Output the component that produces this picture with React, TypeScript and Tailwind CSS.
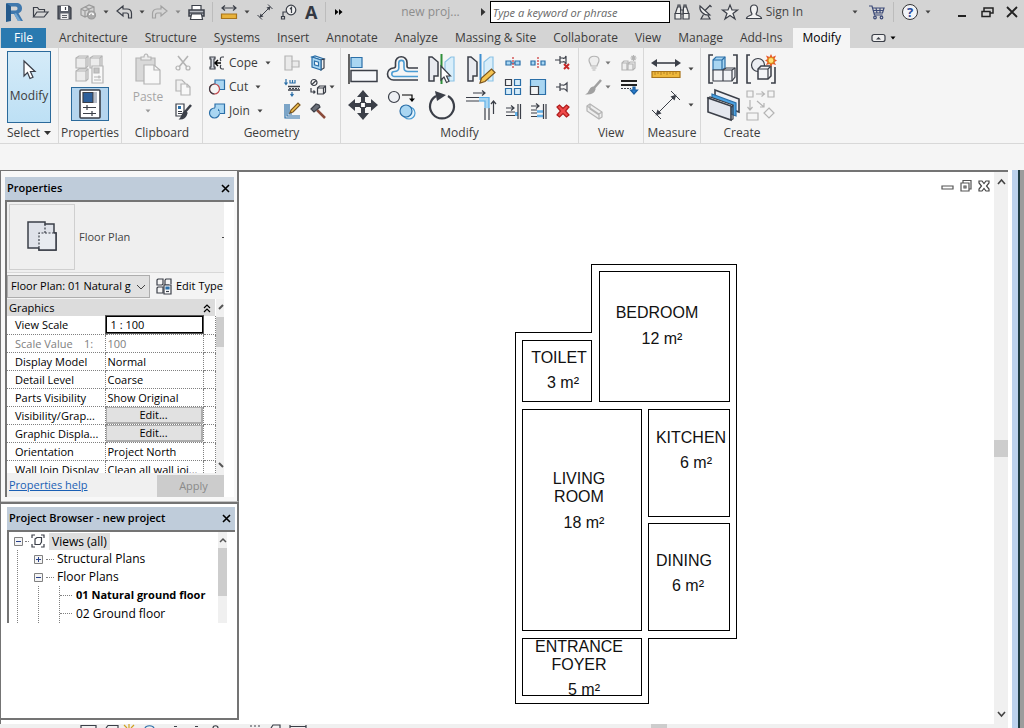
import React from "react";

const DARK = "#3b3f48";
const GRAY = "#b4b4b4";
const BLUE = "#2b6fa8";
const SKY = "#a9d6f2";

interface IconProps {
  w?: number;
  h?: number;
  stroke?: string;
  children: React.ReactNode;
}

function Icon({ w = 16, h = 16, stroke = DARK, children }: IconProps) {
  return (
    <svg
      width={w}
      height={h}
      viewBox={`0 0 ${w} ${h}`}
      fill="none"
      stroke={stroke}
      strokeWidth={1.2}
      className="shrink-0 overflow-visible"
      aria-hidden="true"
    >
      {children}
    </svg>
  );
}

function Caret({ color = "#444444" }: { color?: string }) {
  return (
    <svg width="4" height="4" viewBox="0 0 4 4" className="shrink-0 overflow-visible" aria-hidden="true">
      <path d="M-0.5 0.5h5L2 3.5z" fill={color} />
    </svg>
  );
}

function Tool({ label, children }: { label: string; children: React.ReactNode }) {
  return (
    <button type="button" aria-label={label} className="flex shrink-0 items-center justify-center">
      {children}
    </button>
  );
}

function Separator() {
  return <div className="h-5 w-px shrink-0 bg-[#bcbcbc]" />;
}

function TitleBar() {
  return (
    <header className="mb-1 flex h-6 items-center pr-1 pl-1 text-xs text-[#444444]">
      <div className="flex items-center gap-2">
        <Icon w={20} h={20} stroke="none">
          <path d="M3 1h9c4 0 6 2 6 5.500c0 2.500-1.500 4-3.500 4.800L19 19h-5l-4-7H7v7H2z" fill="#3f78ad" />
          <path d="M7 4.500h4.500c1.500 0 2 .8 2 2s-.7 2-2 2H7z" fill="#d4d4d4" />
          <path d="M2 1l5 3.500V19l-5 1z" fill="#255a8c" />
          <path d="M10 12l4 7h3l-5-8z" fill="#6fa5d2" />
        </Icon>
        <Tool label="Open">
          <Icon>
            <path d="M1.500 13V3.500h4l1.500 2h5.500V8M1.500 13l3.500-5h11l-4 5z" />
          </Icon>
        </Tool>
        <Tool label="Save">
          <Icon>
            <path d="M2 2h11l2 2v11H2z" fill="#5a5f69" />
            <path d="M5 2h7v5H5z" fill="#ffffff" stroke="none" />
            <path d="M9.500 3v3" />
            <path d="M4.500 9.500h8V15h-8z" fill="#eeeeee" stroke="none" />
            <path d="M6 11.500h5M6 13.500h5" strokeWidth={0.8} />
          </Icon>
        </Tool>
        <Tool label="Synchronize">
          <Icon stroke="#999999">
            <path d="M1 5l4-2 4 2v6l-4 2-4-2zM5 3l4-2 5 2v6M1 5l4 2 4-2M5 7v6M9 5l5-2" />
            <circle cx="11.500" cy="11" r="4" fill="#aaaaaa" />
            <path d="M9.500 11a2 2 0 0 1 4 0M13.500 11l-1.200-1" stroke="#ffffff" />
          </Icon>
        </Tool>
        <Tool label="Synchronize options">
          <Caret />
        </Tool>
        <Tool label="Undo">
          <Icon>
            <path d="M1 7l6-5v3h4c3 0 4.500 2 4.500 4.500V14h-3v-3c0-1.500-1-2-2-2H7v3z" />
          </Icon>
        </Tool>
        <Tool label="Undo history">
          <Caret />
        </Tool>
        <Tool label="Redo">
          <Icon stroke="#a2a2a2">
            <path d="M15 7L9 2v3H5C2 5 .5 7 .5 9.500V14h3v-3c0-1.500 1-2 2-2H9v3z" />
          </Icon>
        </Tool>
        <Tool label="Redo history">
          <Caret color="#888888" />
        </Tool>
        <Tool label="Print">
          <Icon>
            <path d="M4 6V1.500h9V6" fill="#ffffff" />
            <path d="M1 6h15v6H1z" fill="#b9bdc4" strokeWidth={1.500} />
            <path d="M3.500 10h10l1 5.500h-12z" fill="#ffffff" />
            <path d="M1 9h15" />
          </Icon>
        </Tool>
        <Separator />
        <Tool label="Measure">
          <Icon>
            <path d="M1 4h14M4 1.500L1 4l3 2.500M12 1.500L15 4l-3 2.500" />
            <path d="M.5 10h15v4.500H.5z" fill="#e8b23a" stroke="#a8741a" />
          </Icon>
        </Tool>
        <Tool label="Measure options">
          <Caret />
        </Tool>
        <Tool label="Aligned Dimension">
          <Icon>
            <path d="M3 13L13 3M11 .5L15.500 5M.5 11L5 15.500" strokeWidth={1} />
            <path d="M2.500 13.500l1-4 3 3zM13.500 2.500l-1 4-3-3z" fill={DARK} stroke="none" />
          </Icon>
        </Tool>
        <Tool label="Tag by Category">
          <Icon>
            <circle cx="10" cy="6" r="4.800" fill="#eeeeee" />
            <path d="M9 5l1.500-1.500V9M5 8H2v4M.5 12.500h3V15h-3z" />
          </Icon>
        </Tool>
        <button type="button" aria-label="Text" className="w-3 text-lg leading-5 font-bold text-[#333842]">
          A
        </button>
        <Separator />
        <Tool label="Customize Quick Access Toolbar">
          <Icon w={8} h={8} stroke="none">
            <path d="M1 1l3.500 3L1 7zM5 1l3.500 3L5 7z" fill="#000000" />
          </Icon>
        </Tool>
      </div>
      <div className="flex-1" />
      <span className="mr-5 text-[#8d8d8d]">new proj...</span>
      <div className="mr-1">
        <Tool label="Search options">
          <Icon w={6} h={8} stroke="none">
            <path d="M1 0l4.500 4L1 8z" fill="#333333" />
          </Icon>
        </Tool>
      </div>
      <input
        type="text"
        aria-label="Search"
        placeholder="Type a keyword or phrase"
        className="mr-1 h-[22px] w-[180px] border border-black bg-white px-0.5 text-[11px] italic placeholder:text-[#666666]"
      />
      <div className="flex items-center gap-2">
        <Tool label="Find">
          <Icon>
            <path
              d="M1.500 9l2-6h3l.5 12H1v-6M14.500 9l-2-6h-3L9 15h6V9M7 6h2v4H7M1 9.500h5.500M9.500 9.500H15M4 3V1h2v2M10 3V1h2v2"
              fill="#eeeeee"
            />
          </Icon>
        </Tool>
        <Tool label="Communication Center">
          <Icon>
            <path d="M2 2c-1 5 4 10 10 9z" fill="#eeeeee" />
            <path d="M7 6.500l5-5M11.500 1l2 2M5.500 10.500L3 15h9l-2-3.500" />
          </Icon>
        </Tool>
        <Tool label="Favorites">
          <Icon>
            <path d="M8 1l2 5h5.500l-4.500 3.500L13 15l-5-3.500L3 15l2-5.500L.5 6H6z" fill="#eeeeee" />
          </Icon>
        </Tool>
        <button type="button" className="flex items-center gap-1 whitespace-nowrap">
          <Icon>
            <path d="M8 1c2.500 0 3.500 1.500 3.500 4S10 10 10 10c0 2 5 1 5.500 4.500H.5C1 11 6 12 6 10c0 0-1.500-2.500-1.500-5S5.500 1 8 1z" fill="#f2f2f2" />
          </Icon>
          Sign In
        </button>
      </div>
      <div className="ml-[50px] flex items-center gap-3">
        <Tool label="Account menu">
          <Caret />
        </Tool>
        <Tool label="App Store">
          <Icon stroke="#3c4a78">
            <path d="M0 2h3l2.500 9h8M4 4h11l-1.500 5H5.500M7 4l1 5M11 4v5M4.500 6.500h10" />
            <circle cx="6" cy="13.500" r="1.300" />
            <circle cx="12.500" cy="13.500" r="1.300" />
          </Icon>
        </Tool>
      </div>
      <div className="mr-7 ml-2 flex items-center gap-2">
        <Separator />
        <Tool label="Help">
          <span className="flex h-4 w-4 items-center justify-center rounded-full border border-[#333333] bg-[#f2f4f8] text-[13px] leading-none font-bold text-[#2a4a9a]">
            ?
          </span>
        </Tool>
        <Tool label="Help menu">
          <Caret />
        </Tool>
      </div>
      <div className="flex items-center gap-3">
        <Tool label="Minimize">
          <Icon w={10} h={14} stroke="#222222">
            <path d="M0 11h8" strokeWidth={2} />
          </Icon>
        </Tool>
        <Tool label="Restore">
          <Icon w={14} h={14} stroke="#222222">
            <path d="M4 6V3h9v5h-3" strokeWidth={1.500} />
            <path d="M2 6.500h8v5H2z" strokeWidth={1.500} />
          </Icon>
        </Tool>
        <Tool label="Close">
          <Icon w={14} h={14} stroke="#222222">
            <path d="M1 2l10 10M11 2L1 12" strokeWidth={1.800} />
          </Icon>
        </Tool>
      </div>
    </header>
  );
}

const TABS = [
  "Architecture",
  "Structure",
  "Systems",
  "Insert",
  "Annotate",
  "Analyze",
  "Massing & Site",
  "Collaborate",
  "View",
  "Manage",
  "Add-Ins",
  "Modify",
];

function Tabs() {
  return (
    <nav className="flex h-5 items-stretch gap-px pl-px text-xs text-[#3c3c3c]">
      <button type="button" className="mr-1 w-[45px] bg-[#2a7ab0] text-white">
        File
      </button>
      {TABS.map((tab) => (
        <button
          key={tab}
          type="button"
          className={`whitespace-nowrap ${tab === "Modify" ? "ml-0.5 bg-[#f5f5f5] px-[9px] text-black" : "px-2"}`}
        >
          {tab}
        </button>
      ))}
      <button type="button" aria-label="Minimize ribbon" className="ml-5 flex items-center gap-1">
        <Icon w={16} h={8}>
          <rect x="1" y="0.5" width="13" height="7" rx="2" fill="#eeeeee" />
          <path d="M5 5.500L7.500 3 10 5.500z" fill={DARK} stroke="none" />
        </Icon>
        <Caret color="#000000" />
      </button>
    </nav>
  );
}

function Panel({ label, className, children }: { label: React.ReactNode; className: string; children: React.ReactNode }) {
  return (
    <section className={`flex flex-col pt-[3px] ${className}`}>
      <div className="flex h-[72px] justify-center">{children}</div>
      <div className="flex h-5 items-center justify-center text-xs">{label}</div>
    </section>
  );
}

const SMALL_MODIFY = [
  {
    label: "Split Element",
    icon: (
      <>
        <path d="M1 6h5v4H1zM10 6h5v4h-5z" fill={SKY} stroke={BLUE} />
        <path d="M6 8h4" stroke={BLUE} />
        <path d="M8 2v12" stroke="#cc3333" strokeDasharray="2 1" />
      </>
    ),
  },
  {
    label: "Split with Gap",
    icon: (
      <>
        <path d="M1 6h4v4H1zM11 6h4v4h-4z" fill={SKY} stroke={BLUE} />
        <path d="M8 2v12" stroke="#cc3333" strokeDasharray="2 1" />
      </>
    ),
  },
  {
    label: "Unpin",
    icon: (
      <>
        <path d="M0 5h5M5 1v8M5 3h3c1 1 2 0 3-2v8c-1-2-2-3-3-2H5" />
        <path d="M9 9l5 5M14 9l-5 5" stroke="#c62828" strokeWidth={2} />
      </>
    ),
  },
  {
    label: "Array",
    icon: (
      <>
        <path d="M.5 .5h6v6h-6z" />
        <path d="M9.500 .5h6v6h-6zM.5 9.500h6v6h-6zM9.500 9.500h6v6h-6z" fill="#d5ecfa" stroke={BLUE} />
      </>
    ),
  },
  {
    label: "Scale",
    icon: (
      <>
        <path d="M.5 .5h15v15H.5z" fill={SKY} stroke={BLUE} />
        <path d="M.5 7.500h8v8h-8z" fill="#f4f4f4" />
      </>
    ),
  },
  {
    label: "Pin",
    icon: <path d="M1 8h4M5 4v8M5 6h3c1 1 2 0 4-2v8c-2-2-3-3-4-2H5" />,
  },
  {
    label: "Trim/Extend Single Element",
    icon: (
      <>
        <path d="M1 5h8M6 2.500L9 5 6 7.500M1 9h9M1 12.500h9" />
        <path d="M10 11h3" stroke="#62b0e8" strokeWidth={4} />
        <path d="M13 1v15M15.500 1v15" />
      </>
    ),
  },
  {
    label: "Trim/Extend Multiple Elements",
    icon: (
      <>
        <path d="M1 3h8M6 .5L9 3 6 5.500M1 7h6M1 10h6M1 13.500h6" />
        <path d="M7 8.500h6M7 13h6" stroke="#62b0e8" strokeWidth={2.500} />
        <path d="M13.500 1v15M16 1v15" />
      </>
    ),
  },
  {
    label: "Delete",
    icon: (
      <path d="M2 4l2.500-2L8 5.500 11.500 2 14 4l-3.500 4 3.500 4-2.500 2L8 10.500 4.500 14 2 12l3.500-4z" fill="#f04a4a" stroke="#b01c1c" />
    ),
  },
];

const LARGE_MODIFY = [
  {
    label: "Align",
    icon: (
      <>
        <path d="M1 1v30" stroke="#000000" />
        <path d="M3 4.500h11v10H3z" fill={SKY} stroke={BLUE} />
        <path d="M3 17.500h26v11H3z" fill="#f6f7fa" strokeWidth={1.500} />
      </>
    ),
  },
  {
    label: "Offset",
    icon: (
      <>
        <path
          d="M31 15H22c-1 0-2-1-2-2V9.500a5.700 5.700 0 0 0-11.500 0V13c0 1.500-1 2-2 2a5.500 5.500 0 0 0 0 12H31"
          strokeWidth={1.600}
        />
        <path
          d="M31 18.500H21c-2.500 0-4-1.500-4-4V10a2.600 2.600 0 0 0-5.200 0v5c0 2-2 3.500-4.500 3.500a2.500 2.500 0 0 0 0 5H31"
          stroke="#4b9cd3"
          strokeWidth={1.600}
        />
      </>
    ),
  },
  {
    label: "Mirror - Pick Axis",
    icon: (
      <>
        <path d="M3 4h3l6 5v14H8v5H3z" fill="#e8eaf0" strokeWidth={1.500} />
        <path d="M28 4h-3l-6 5v14h4v5h5z" fill="#d9eefa" stroke="#8cc3e6" />
        <path d="M15.500 1v30" stroke="#2f8f3a" strokeWidth={2} />
        <path d="M15 13v14l3-3 2.500 5.500 2.500-1.200-2.500-5.300h4z" fill="#ffffff" />
      </>
    ),
  },
  {
    label: "Mirror - Draw Axis",
    icon: (
      <>
        <path d="M3 4h3l6 5v14H8v5H3z" fill="#e8eaf0" strokeWidth={1.500} />
        <path d="M28 4h-3l-6 5v14h4v5h5z" fill="#d9eefa" stroke="#8cc3e6" />
        <path d="M15.500 1v26" stroke="#3f8fd0" strokeWidth={2} />
        <path d="M15 30l1.500-5 10-9 3.500 3.500-10 9z" fill="#f5c451" stroke="#7a5520" />
      </>
    ),
  },
  {
    label: "Move",
    icon: (
      <>
        <path
          d="M15 1l6 7h-4v5h-4V8H9zM15 31l6-7h-4v-5h-4v5H9zM0 16l7-6v4h5v4H7v4zM30 16l-7-6v4h-5v4h5v4z"
          fill={DARK}
          stroke="none"
        />
        <path d="M12.500 13.500h5v5h-5z" fill="#ffffff" />
      </>
    ),
  },
  {
    label: "Copy",
    icon: (
      <>
        <circle cx="7" cy="8" r="5.500" fill="#eef0f4" />
        <path d="M15 6h10v5" stroke="#000000" />
        <path d="M22 9.500h6L25 13z" fill="#000000" stroke="none" />
        <circle cx="22" cy="24" r="6" fill="#e3f2fb" stroke="#4b9cd3" />
        <circle cx="19" cy="22" r="6" fill={SKY} stroke={BLUE} />
      </>
    ),
  },
  {
    label: "Rotate",
    icon: (
      <>
        <path d="M22 7a12 12 0 1 1-12 0" strokeWidth={2.200} />
        <path d="M9 2l11 4-9 6z" fill={DARK} stroke="none" />
      </>
    ),
  },
  {
    label: "Trim/Extend to Corner",
    icon: (
      <>
        <path d="M8 4h12M17 1.500L20 4l-3 2.500M1 8.500h13M1 12h13M20 19v12M24 19v12M28.500 25V12M26 15l2.500-3 2.500 3" />
        <path d="M14 10.200h8.200v9" stroke={SKY} strokeWidth={4} />
        <path d="M14 8.500h10v10.500M14 12h6v7" stroke="#5aaee8" />
      </>
    ),
  },
];

function Ribbon() {
  return (
    <div className="flex h-24 divide-x divide-[#d8d8d8] border-b border-[#d8d8d8] bg-[#f5f5f5] text-[#3c3c3c]">
      <Panel
        className="w-[59px] shrink-0"
        label={
          <button type="button" className="flex items-center gap-1">
            Select
            <Icon w={7} h={4} stroke="none">
              <path d="M0 0h7L3.500 4z" fill="#333333" />
            </Icon>
          </button>
        }
      >
        <button
          type="button"
          className="flex w-11 flex-col items-center gap-2 border border-[#2b6a9b] bg-gradient-to-b from-[#d5ebf8] to-[#bde0f5] pt-2 text-xs"
        >
          <Icon w={16} h={20}>
            <path d="M3 1v15l3.500-3.500L9 18.500l3-1.200-2.600-5.800H14z" fill="#ffffff" />
          </Icon>
          Modify
        </button>
      </Panel>

      <Panel className="w-[63px] shrink-0" label="Properties">
        <div className="flex flex-col items-center">
          <div className="flex h-9 items-center">
            <Tool label="Type Properties">
              <Icon w={30} h={30} stroke={GRAY}>
                <path d="M1 4l3-2h9v10l-2 2H1zM15 4l3-2h9v10l-2 2H15zM1 17l3-2h9v10l-2 2H1z" fill="#ececec" />
                <path d="M1 4h10v10M11 4l2-2M15 4h10v8M25 4l2-2M1 17h10v10M11 17l2-2" />
                <path d="M17 12h11v17H17z" fill="#f8f8f8" />
                <path d="M19 14h5v5h-5z" fill="#c4c4c4" />
                <path d="M19 23h7M19 26h7M24 21.500v3" />
              </Icon>
            </Tool>
          </div>
          <button
            type="button"
            aria-label="Properties"
            className="flex h-[34px] w-[38px] items-center justify-center border border-[#2b6a9b] bg-[#b5d5ee]"
          >
            <Icon w={22} h={30}>
              <rect x="1" y="1" width="20" height="28" rx="1" fill="#ffffff" strokeWidth={1.600} />
              <path d="M4 3.500h10v10H4z" fill="#2d5f9a" />
              <path d="M16.500 3v11" stroke="#b7bdc8" strokeWidth={3} />
              <path d="M4 18.500h13M4 24.500h13M8 16v5M13 22v5" />
            </Icon>
          </button>
        </div>
      </Panel>

      <Panel className="w-[81px] shrink-0" label="Clipboard">
        <div className="flex gap-3">
          <button type="button" className="flex flex-col items-center gap-1 pt-0.5 text-xs text-[#a5a5a5]">
            <Icon w={28} h={32} stroke={GRAY}>
              <path d="M2 5h19v23H2z" fill="#d9d9d9" />
              <path d="M7 7V4h3c0-4 4-4 4 0h3v3z" fill="#eeeeee" />
              <path d="M10 12h10l6 5v14H10z" fill="#f8f8f8" />
              <path d="M20 12v5h6" />
            </Icon>
            Paste
            <Caret color="#9a9a9a" />
          </button>
          <div className="grid grid-rows-3">
            <Tool label="Cut to Clipboard">
              <Icon stroke={GRAY}>
                <path d="M3 1l9 11M13 1L4 12" strokeWidth={1.600} />
                <circle cx="3" cy="13" r="2" />
                <circle cx="13" cy="13" r="2" />
              </Icon>
            </Tool>
            <Tool label="Copy to Clipboard">
              <Icon stroke={GRAY}>
                <path d="M1 1h6l3 3v8H1z" fill="#f0f0f0" />
                <path d="M6 5h6l3 3v8H6z" fill="#f8f8f8" />
                <path d="M12 5v3h3" />
              </Icon>
            </Tool>
            <Tool label="Match Type Properties">
              <Icon>
                <path d="M1 1h8v12H1z" fill="#ffffff" />
                <path d="M3 3h3v3H3z" fill={BLUE} stroke="none" />
                <path d="M3 8.500h4M3 10.500h4" />
                <path d="M16 2l-6 7" strokeWidth={2.500} />
                <path d="M10 8l2 2c-1 4-4 6-7 6 2-2 2-6 5-8z" fill={DARK} />
              </Icon>
            </Tool>
          </div>
        </div>
      </Panel>

      <Panel className="w-[138px] shrink-0" label="Geometry">
        <div className="grid grid-cols-[73px_20px_32px] grid-rows-3 text-xs">
          <button type="button" className="flex items-center gap-1">
            <Icon>
              <path d="M1 2h5v2H5v8h1v2H1v-2h1V4H1z" fill="#d8dbe2" />
              <path d="M6 8h6M9 5L6 8l3 3" stroke="#000000" strokeWidth={1.500} />
              <path d="M15 2h-2c-2 0-2 3-1 4M15 14h-2c-2 0-2-3-1-4" />
            </Icon>
            Cope
            <span className="pl-1">
              <Caret />
            </span>
          </button>
          <Tool label="Wall Opening">
            <Icon stroke={GRAY}>
              <path d="M1 1h7v5h7v6H8v3H1z" fill="#eaeaea" />
              <path d="M8 6v6" />
            </Icon>
          </Tool>
          <button type="button" aria-label="Paint" className="flex items-center pl-2">
            <Icon>
              <path d="M2 2l3-1 9 3-3 1z" fill="#e6f3fb" stroke={BLUE} />
              <path d="M11 5l3-1v9l-3 2z" fill="#f4f4f4" />
              <path d="M2 2l9 3v10l-9-3z" fill={SKY} stroke={BLUE} />
              <path d="M4.500 6l4 1.200v3.800l-4-1.200z" fill="#ffffff" stroke={BLUE} />
            </Icon>
          </button>
          <button type="button" className="flex items-center gap-1">
            <Icon>
              <path d="M6 1h9.500v9.500H6z" fill={SKY} stroke={BLUE} />
              <circle cx="5.500" cy="10" r="5" fill="#f4f4f4" stroke="#c0474b" />
              <path d="M5.500 15a5 5 0 0 1 0-10" />
            </Icon>
            Cut
            <span className="pl-1">
              <Caret />
            </span>
          </button>
          <Tool label="Beam/Column Joins">
            <Icon>
              <path d="M2 0v5M.5 3.500L2 5.500l1.500-2M6 1v3h5V1M8.500 1v3M8 13v4M6.500 15L8 17l1.500-2" stroke={BLUE} />
              <path d="M4 7.500h12M4 11h12" strokeWidth={1.500} />
              <path d="M5 9.500h10" strokeDasharray="2 1" />
            </Icon>
          </Tool>
          <button type="button" aria-label="Split Face" className="flex items-center gap-1 pl-2">
            <Icon>
              <circle cx="4" cy="3.500" r="3" />
              <path d="M2 5.500l4-4M1 9v4h4M3.500 11.500L5 13l-1.500 1.500" />
              <path d="M7.500 9l2-2h6v6l-2 2h-6z" fill="#f0f0f0" />
              <path d="M7.500 9h6v6M13.500 9l2-2" />
            </Icon>
            <Caret />
          </button>
          <button type="button" className="flex items-center gap-1">
            <Icon>
              <path d="M6 1h9.500v9.500H6z" fill={SKY} stroke={BLUE} />
              <circle cx="5.500" cy="10" r="5" fill={SKY} stroke={BLUE} />
              <path d="M7.500 4.500v5h3" stroke={SKY} strokeWidth={3} />
            </Icon>
            Join
            <span className="pl-1">
              <Caret />
            </span>
          </button>
          <Tool label="Edit Wall Joins">
            <Icon>
              <path d="M1 1v14h15M3 1v12h13M5 1v10h3" stroke={BLUE} />
              <path d="M6 10l1-3 7-7 2 2-7 7z" fill="#f5c451" stroke="#7a5520" />
            </Icon>
          </Tool>
          <button type="button" aria-label="Demolish" className="flex items-center pl-2">
            <Icon>
              <path d="M7 7l8 8" stroke="#8a4a3a" strokeWidth={2.500} />
              <path d="M1 6l5-5 3 1 1 2-6 5z" fill="#6a6f78" />
            </Icon>
          </button>
        </div>
      </Panel>

      <Panel className="w-[238px] shrink-0" label="Modify">
        <div className="grid grid-cols-[39px_39px_39px_39px] grid-rows-2">
          {LARGE_MODIFY.map((tool) => (
            <Tool key={tool.label} label={tool.label}>
              <Icon w={32} h={32}>
                {tool.icon}
              </Icon>
            </Tool>
          ))}
        </div>
        <div className="grid grid-cols-[25px_25px_25px] grid-rows-3">
          {SMALL_MODIFY.map((tool) => (
            <Tool key={tool.label} label={tool.label}>
              <Icon>{tool.icon}</Icon>
            </Tool>
          ))}
        </div>
      </Panel>

      <Panel className="w-[65px] shrink-0" label="View">
        <div className="grid grid-cols-[35px_16px] grid-rows-3">
          <button type="button" aria-label="Hide in View" className="flex items-center gap-1">
            <Icon stroke={GRAY}>
              <path d="M5 11c0-2-2-3-2-6 0-5 10-5 10 0 0 3-2 4-2 6z" fill="#eeeeee" />
              <path d="M5.500 13h5M6.500 15h3" />
            </Icon>
            <Caret color="#777777" />
          </button>
          <Tool label="Displace Elements">
            <Icon stroke={GRAY}>
              <path d="M1 8l2-2h4v7l-1 2H1zM7 9l2-2h5v6l-2 2H7z" fill="#eeeeee" />
              <path d="M1 8h5v7M7 9h5v6M12.500 0v6M9.500 3h6M10.500 1l4 4M14.500 1l-4 4" />
            </Icon>
          </Tool>
          <button type="button" aria-label="Override Graphics" className="flex items-center gap-1">
            <Icon stroke="#a0a0a0">
              <path d="M15 1L8 9" strokeWidth={2.500} />
              <path d="M7 8l2 2c-1 4-4 5-8 5 3-2 2-6 6-7z" fill="#a0a0a0" />
            </Icon>
            <Caret color="#777777" />
          </button>
          <Tool label="Linework">
            <Icon>
              <path d="M0 2h16M0 6h16" stroke="#222222" strokeWidth={1.800} />
              <path d="M0 9.500h10" strokeDasharray="2 1" />
              <path d="M12 8v3H9.500l3.500 4 3.500-4H14V8z" fill="#2b7fd0" stroke="#1c5fa0" />
            </Icon>
          </Tool>
          <button type="button" aria-label="Selection Box" className="flex items-center">
            <Icon stroke={GRAY}>
              <path d="M1 3l3-2 12 8v5l-3 2L1 8z" fill="#eeeeee" />
              <path d="M1 3l12 8v5M13 11l3-2M4 1v5l9 6" />
            </Icon>
          </button>
        </div>
      </Panel>

      <Panel className="w-[57px] shrink-0" label="Measure">
        <div className="grid grid-rows-2">
          <button type="button" aria-label="Measure Between Two References" className="flex items-center gap-2">
            <Icon w={30} h={30}>
              <path d="M2 9h26" strokeWidth={1.600} />
              <path d="M0 9l6-4v8zM30 9l-6-4v8z" fill={DARK} stroke="none" />
              <path d="M1 17.500h28v6H1z" fill="#eeb83c" stroke="#a8741a" />
              <path d="M4 18v3M7 18v2M10 18v3M13 18v2M16 18v3M19 18v2M22 18v3M25 18v2" stroke="#a8741a" strokeWidth={0.800} />
            </Icon>
            <Caret />
          </button>
          <button type="button" aria-label="Aligned Dimension" className="flex items-center gap-2">
            <Icon w={30} h={30}>
              <path d="M6 24L24 6M20 1l9 9M1 20l9 9" strokeWidth={1} />
              <path d="M4.500 25.500l2-6 4 4zM25.500 4.500l-6 2 4 4z" fill={DARK} stroke="none" />
            </Icon>
            <Caret />
          </button>
        </div>
      </Panel>

      <Panel className="w-[82px] shrink-0" label="Create">
        <div className="grid grid-cols-[38px_38px] grid-rows-2">
          <Tool label="Create Assembly">
            <Icon w={30} h={32}>
              <path d="M5 2H1v28h4M25 2h4v28h-4" strokeWidth={1.600} />
              <path d="M5 7l3-3h9v11l-3 2H5z" fill={SKY} stroke={BLUE} />
              <path d="M5 7h9v10M14 7l3-3" stroke={BLUE} />
              <path d="M5 17h10v11H5zM15 17l3-2h9v9l-3 4h-9z" fill="#f2f3f6" />
              <path d="M15 17h9v11M24 17l3-2" />
            </Icon>
          </Tool>
          <Tool label="Create Group">
            <Icon w={30} h={32}>
              <path d="M4 2H1v28h4M29 14v16h-4" strokeWidth={1.600} />
              <circle cx="12" cy="12" r="6.500" fill="#eceef2" />
              <path d="M12 16l3-3h10v10l-3 3H12z" fill="#f4f5f8" strokeWidth={1.500} />
              <path d="M12 16h10v10M22 16l3-3" />
              <path d="M25 1l1.500 3L30 2.500l-1.500 3.500L31 7.500 28.500 9 30 12l-3.500-1L25 14l-1.500-3L20 12l1.500-3L19 7.500 21.500 6 20 2.500 23.500 4z" fill="#e8582a" stroke="none" />
              <circle cx="25" cy="7.500" r="3" fill="#ffe27a" stroke="#d98a1c" />
            </Icon>
          </Tool>
          <Tool label="Create Parts">
            <Icon w={32} h={32}>
              <path d="M8 1l24 9v13L8 14z" fill="#f0f1f5" strokeWidth={1.600} />
              <path d="M5 5l24 9v13L5 18z" fill="#4ba3e3" stroke={BLUE} />
              <path d="M1 9l2-1 23 8-1 2z" fill="#ffffff" />
              <path d="M26 16v14l-2 1" />
              <path d="M1 9l23 8v14L1 23z" fill="#e4e7ee" strokeWidth={1.600} />
            </Icon>
          </Tool>
          <Tool label="Create Similar">
            <Icon w={30} h={32} stroke={GRAY}>
              <path d="M1 2h6v6H1zM22 2h6v6h-6zM1 24h11v7H1zM23 19l5 5-5 5-5-5zM10 5h8M15.500 2.500L18.500 5l-3 2.500M4 11v10M1.500 18L4 21l2.500-3M11 12l7 6M18 14v4h-4" />
            </Icon>
          </Tool>
        </div>
      </Panel>
    </div>
  );
}

function PanelHeader({ title }: { title: string }) {
  return (
    <div className="flex h-[23px] items-center justify-between bg-[#bfccda] pr-1 pl-0.5 text-[11px] font-semibold text-black">
      <span>{title}</span>
      <Tool label={`Close ${title}`}>
        <Icon w={9} h={9} stroke="#000000">
          <path d="M1 1l7 7M8 1L1 8" strokeWidth={1.600} />
        </Icon>
      </Tool>
    </div>
  );
}

const ROWS = [
  { name: "View Scale", value: "1 : 100", kind: "input" },
  { name: "Scale Value    1:", value: "100", kind: "disabled" },
  { name: "Display Model", value: "Normal", kind: "text" },
  { name: "Detail Level", value: "Coarse", kind: "text" },
  { name: "Parts Visibility", value: "Show Original", kind: "text" },
  { name: "Visibility/Grap...", value: "Edit...", kind: "button" },
  { name: "Graphic Displa...", value: "Edit...", kind: "button" },
  { name: "Orientation", value: "Project North", kind: "text" },
  { name: "Wall Join Display", value: "Clean all wall joi...", kind: "text" },
];

function ValueCell({ row }: { row: (typeof ROWS)[number] }) {
  if (row.kind === "input") {
    return (
      <input
        type="text"
        aria-label={row.name}
        defaultValue={row.value}
        className="block h-[17px] w-full border border-black bg-white px-1 outline outline-[#555555]"
      />
    );
  }
  if (row.kind === "button") {
    return (
      <button
        type="button"
        aria-label={`${row.name} ${row.value}`}
        className="block h-[17px] w-full border border-r-2 border-b-2 border-[#adadad] bg-[#e1e1e1] leading-[14px]"
      >
        {row.value}
      </button>
    );
  }
  return <div className="pl-0.5 whitespace-nowrap">{row.value}</div>;
}

function PropertiesPanel() {
  return (
    <section className="border-t border-r-2 border-b border-[#747474] border-b-[#c4c4c4] bg-[#f8f8f8] pt-1.5 pr-[3px] pb-1 pl-1">
      <PanelHeader title="Properties" />
      <div className="border-t-2 border-l-2 border-[#747474] bg-white pr-2.5">
        <div className="flex h-[71px] items-center justify-between border-b border-[#d8d8d8] bg-[#efefef] pl-0.5 text-[11px] text-[#444444]">
          <div className="flex items-center gap-1">
            <div className="flex h-[66px] w-[66px] items-center justify-center border border-[#cfcfcf]">
              <Icon w={30} h={32}>
                <path d="M1 1h17v2h9v9h2v17H12v-2H1z" fill="#dfe2e9" strokeWidth={1.500} />
                <path d="M12 12h17v17H12z" fill="#e8ebf0" stroke="none" />
                <path d="M27 12h2v17H12v-2" strokeWidth={1.500} />
                <path d="M18 3v9M12 27V12h15" strokeDasharray="2 1.500" />
              </Icon>
            </div>
            Floor Plan
          </div>
          <span className="h-px w-0.5 bg-[#444444]" />
        </div>
        <div className="flex h-[26px] items-center gap-1.5 overflow-hidden bg-[#f4f4f4] text-[11px] text-black">
          <div className="relative h-[23px] w-[143px] shrink-0">
            <select
              aria-label="View type"
              className="h-full w-full appearance-none overflow-hidden border border-[#adadad] bg-[#e1e1e1] pr-[18px] pl-[3px] text-clip whitespace-nowrap"
            >
              <option>Floor Plan: 01 Natural ground floor</option>
            </select>
            <svg className="pointer-events-none absolute top-2 right-1 h-2 w-2.5" viewBox="0 0 10 8" fill="none" stroke="#444444">
              <path d="M1 2l4 4 4-4" />
            </svg>
          </div>
          <button type="button" className="flex items-center gap-1 whitespace-nowrap">
            <Icon>
              <path d="M1 2l1-1h5v5L6 7H1zM9 2l1-1h5v5M1 10l1-1h5v6H1zM9 2v5h4" />
              <path d="M8 7h7v9H8z" fill="#ffffff" />
              <path d="M10 9h3v2h-3z" fill={BLUE} stroke={BLUE} />
              <path d="M10 13.500h3" />
            </Icon>
            Edit Type
          </button>
        </div>
        <div className="flex h-[174px] overflow-hidden">
          <table className="w-[208px] shrink-0 table-fixed border-collapse text-[11px] leading-[17px] text-black">
            <colgroup>
              <col className="w-[98px]" />
              <col className="w-[98px]" />
              <col className="w-3" />
            </colgroup>
            <thead>
              <tr className="h-[17px] bg-[#dcdcdc]">
                <th colSpan={3} className="p-0 font-normal">
                  <div className="flex items-center justify-between pr-1 pl-0.5">
                    Graphics
                    <Icon w={8} h={8} stroke="#000000">
                      <path d="M1 4l3-3 3 3M1 8l3-3 3 3" />
                    </Icon>
                  </div>
                </th>
              </tr>
            </thead>
            <tbody>
              {ROWS.map((row) => (
                <tr key={row.name} className={`h-[18px] ${row.kind === "disabled" ? "text-[#808080]" : ""}`}>
                  <td className="border-r border-b border-dotted border-[#808080] p-0 pl-2 whitespace-pre">
                    {row.name}
                  </td>
                  <td className="border-r border-b border-dotted border-[#808080] p-0">
                    <ValueCell row={row} />
                  </td>
                  <td className="border-r border-b border-dotted border-[#808080] p-0" />
                </tr>
              ))}
            </tbody>
          </table>
          <div className="flex flex-1 flex-col items-end bg-[#f0f0f0] pt-1">
            <Icon w={6} h={8} stroke="#555555">
              <path d="M1 6l4-4" strokeWidth={2} />
            </Icon>
            <div className="mt-1.5 h-[30px] w-2 bg-[#cdcdcd]" />
            <div className="flex-1" />
            <Icon w={6} h={12} stroke="#555555">
              <path d="M1 2l4 4" strokeWidth={2} />
            </Icon>
          </div>
        </div>
        <div className="flex h-6 items-stretch justify-between bg-[#f0f0f0] pl-0.5 text-[11px]">
          <a href="#help" className="self-center text-[#1a5fb4] underline">
            Properties help
          </a>
          <button type="button" disabled className="mt-0.5 w-[67px] bg-[#cccccc] pl-1.5 text-[#8a8a8a]">
            Apply
          </button>
        </div>
      </div>
    </section>
  );
}

function Expander({ open }: { open: boolean }) {
  return (
    <Icon w={9} h={9} stroke="#808080">
      <path d="M.5 .5h8v8h-8z" fill="#f4f4f4" strokeWidth={1} />
      <path d={open ? "M2 4.500h5" : "M2 4.500h5M4.500 2v5"} stroke="#27408b" strokeWidth={1} />
    </Icon>
  );
}

function BrowserPanel() {
  return (
    <section className="flex min-h-0 flex-1 flex-col border-t-2 border-r-2 border-b-2 border-[#747474] bg-white pt-[3px] pr-0.5 pl-1.5">
      <PanelHeader title="Project Browser - new project" />
      <div className="flex h-[93px] border-t-2 border-l-2 border-[#747474] text-xs text-black">
        <ul className="flex-1">
          <li className="flex h-[18px] items-center gap-0.5 pl-[5px]">
            <Expander open />
            <span className="w-1 border-t border-dotted border-[#808080]" />
            <Icon w={14} h={14}>
              <path d="M4 1H1v3M10 1h3v3M4 13H1v-3M10 13h3v-3" />
              <path d="M4 5l2-1.500h4.500V8L9 10.500H4z" />
            </Icon>
            <span className="ml-0.5 bg-[#dedede] px-[3px] leading-[17px]">Views (all)</span>
          </li>
          <li className="ml-2 border-l border-dotted border-[#808080]">
            <ul className="pl-4">
              <li className="flex h-[18px] items-center gap-[3px]">
                <Expander open={false} />
                <span className="w-2 border-t border-dotted border-[#808080]" />
                Structural Plans
              </li>
              <li className="flex h-[18px] items-center gap-[3px]">
                <Expander open />
                <span className="w-2 border-t border-dotted border-[#808080]" />
                Floor Plans
              </li>
              <li className="ml-1 border-l border-dotted border-[#808080] pl-5">
                <ul className="border-l border-dotted border-[#808080]">
                  <li className="flex h-[18px] items-center gap-1 text-[11px] font-bold">
                    <span className="w-3 border-t border-dotted border-[#808080]" />
                    01 Natural ground floor
                  </li>
                  <li className="flex h-[19px] items-center gap-1">
                    <span className="w-3 border-t border-dotted border-[#808080]" />
                    02 Ground floor
                  </li>
                </ul>
              </li>
            </ul>
          </li>
        </ul>
        <div className="mr-2 flex w-[9px] flex-col items-center bg-[#f0f0f0] pt-1">
          <Icon w={7} h={8} stroke="#555555">
            <path d="M1 6l3-3 3 3" strokeWidth={1.500} />
          </Icon>
          <div className="mt-1 h-12 w-full bg-[#cdcdcd]" />
        </div>
      </div>
    </section>
  );
}

const ROOMS = [
  { x: 84, y: 7, w: 131, h: 131 },
  { x: 7, y: 76, w: 70, h: 62 },
  { x: 7, y: 145, w: 120, h: 222 },
  { x: 133, y: 145, w: 82, h: 108 },
  { x: 133, y: 259, w: 82, h: 108 },
  { x: 7, y: 374, w: 120, h: 58 },
];

const LABELS = [
  { x: 142, y: 54, text: "BEDROOM" },
  { x: 147, y: 80, text: "12 m²" },
  { x: 44, y: 99, text: "TOILET" },
  { x: 48, y: 124, text: "3 m²" },
  { x: 176, y: 179, text: "KITCHEN" },
  { x: 181, y: 204, text: "6 m²" },
  { x: 64, y: 220, text: "LIVING" },
  { x: 64, y: 238, text: "ROOM" },
  { x: 69, y: 264, text: "18 m²" },
  { x: 169, y: 302, text: "DINING" },
  { x: 173, y: 327, text: "6 m²" },
  { x: 64, y: 388, text: "ENTRANCE" },
  { x: 64, y: 406, text: "FOYER" },
  { x: 69, y: 431, text: "5 m²" },
];

function FloorPlan() {
  return (
    <svg width="223" height="441" viewBox="0 0 223 441" className="shrink-0" role="img" aria-label="Floor plan">
      <g fill="none" stroke="#000000" transform="translate(0.5 0.5)" shapeRendering="crispEdges">
        <path d="M76 0h145v374h-88v65H0V68h76z" />
        {ROOMS.map((room) => (
          <rect key={`${room.x}-${room.y}`} x={room.x} y={room.y} width={room.w - 1} height={room.h - 1} />
        ))}
      </g>
      <g className="font-['Liberation_Sans',Arial,sans-serif] text-base" textAnchor="middle" fill="#111111">
        {LABELS.map((label) => (
          <text key={`${label.x}-${label.y}`} x={label.x} y={label.y}>
            {label.text}
          </text>
        ))}
      </g>
    </svg>
  );
}

function DrawingArea() {
  return (
    <main className="flex min-w-0 flex-1 border-t-2 border-[#747474] bg-white">
      <div className="flex flex-1 justify-center overflow-hidden pt-[92px] pl-[73px]">
        <FloorPlan />
      </div>
      <div className="flex items-start gap-1.5 pt-[7px] pr-1">
        <Tool label="Minimize view">
          <Icon w={13} h={13} stroke="#555555">
            <path d="M1 7h11v3H1z" />
          </Icon>
        </Tool>
        <Tool label="Restore view">
          <Icon w={12} h={13} stroke="#555555">
            <path d="M1 4h8v8H1zM3 4V1.500h8V10H9M4 7h2v2H4z" />
          </Icon>
        </Tool>
        <Tool label="Close view">
          <Icon w={12} h={13} stroke="#444444">
            <path d="M1 2h3l2 2.500L8 2h3v2L8.500 7 11 10v2H8L6 9.500 4 12H1v-2l2.500-3L1 4z" />
          </Icon>
        </Tool>
      </div>
      <div className="flex w-3.5 flex-col items-center justify-between bg-[#f0f0f0] py-1.5">
        <Icon w={9} h={8} stroke="#444444">
          <path d="M1 6l3.500-4L8 6" strokeWidth={1.600} />
        </Icon>
        <div className="h-[17px] w-full bg-[#cdcdcd]" />
        <Icon w={9} h={8} stroke="#444444">
          <path d="M1 2l3.500 4L8 2" strokeWidth={1.600} />
        </Icon>
      </div>
    </main>
  );
}

function StatusStrip() {
  return (
    <footer className="flex h-1 items-stretch overflow-hidden bg-[#f0f0f0]">
      <div className="ml-20">
        <Icon w={230} h={4}>
          <path d="M1 4V1.500h15V4M26 4l2-2.500h10V4" />
          <path d="M44 1l3 3M49 0v4M54 1l-3 3" stroke="#d0a020" />
          <path d="M65 4c1-3 8-3 9 0" stroke={BLUE} />
          <path d="M94 2.500h3M115 2.500h3M133 4c0-3 5-3 5 0M170 2h2M174 2h2M178 2h2M191 4l2-3h7v3M210 1v3M226 1v3M210 2.500h16" />
        </Icon>
      </div>
      <div className="flex flex-1 justify-center">
        <div className="w-4 bg-[#cdcdcd]" />
      </div>
    </footer>
  );
}

export default function App() {
  return (
    <div className="flex h-screen min-h-[700px] flex-col overflow-hidden bg-[#d4d4d4] font-['Open_Sans','Noto_Sans',sans-serif]">
      <TitleBar />
      <Tabs />
      <Ribbon />
      <div className="h-[26px] shrink-0 bg-[#f5f5f5]" />
      <div className="flex min-h-0 flex-1">
        <div className="flex min-w-0 flex-1 flex-col bg-white">
          <div className="flex min-h-0 flex-1">
            <aside className="flex w-[239px] shrink-0 flex-col border-l border-[#747474] bg-white pb-1">
              <PropertiesPanel />
              <BrowserPanel />
            </aside>
            <DrawingArea />
          </div>
          <StatusStrip />
        </div>
        <div className="w-1 shrink-0 bg-white" />
        <div className="w-1.5 shrink-0 bg-[#bcd2ee]" />
        <div className="w-0.5 shrink-0 bg-[#1e3c46]" />
        <div className="w-1 shrink-0 bg-[#9c9c9c]" />
      </div>
    </div>
  );
}
